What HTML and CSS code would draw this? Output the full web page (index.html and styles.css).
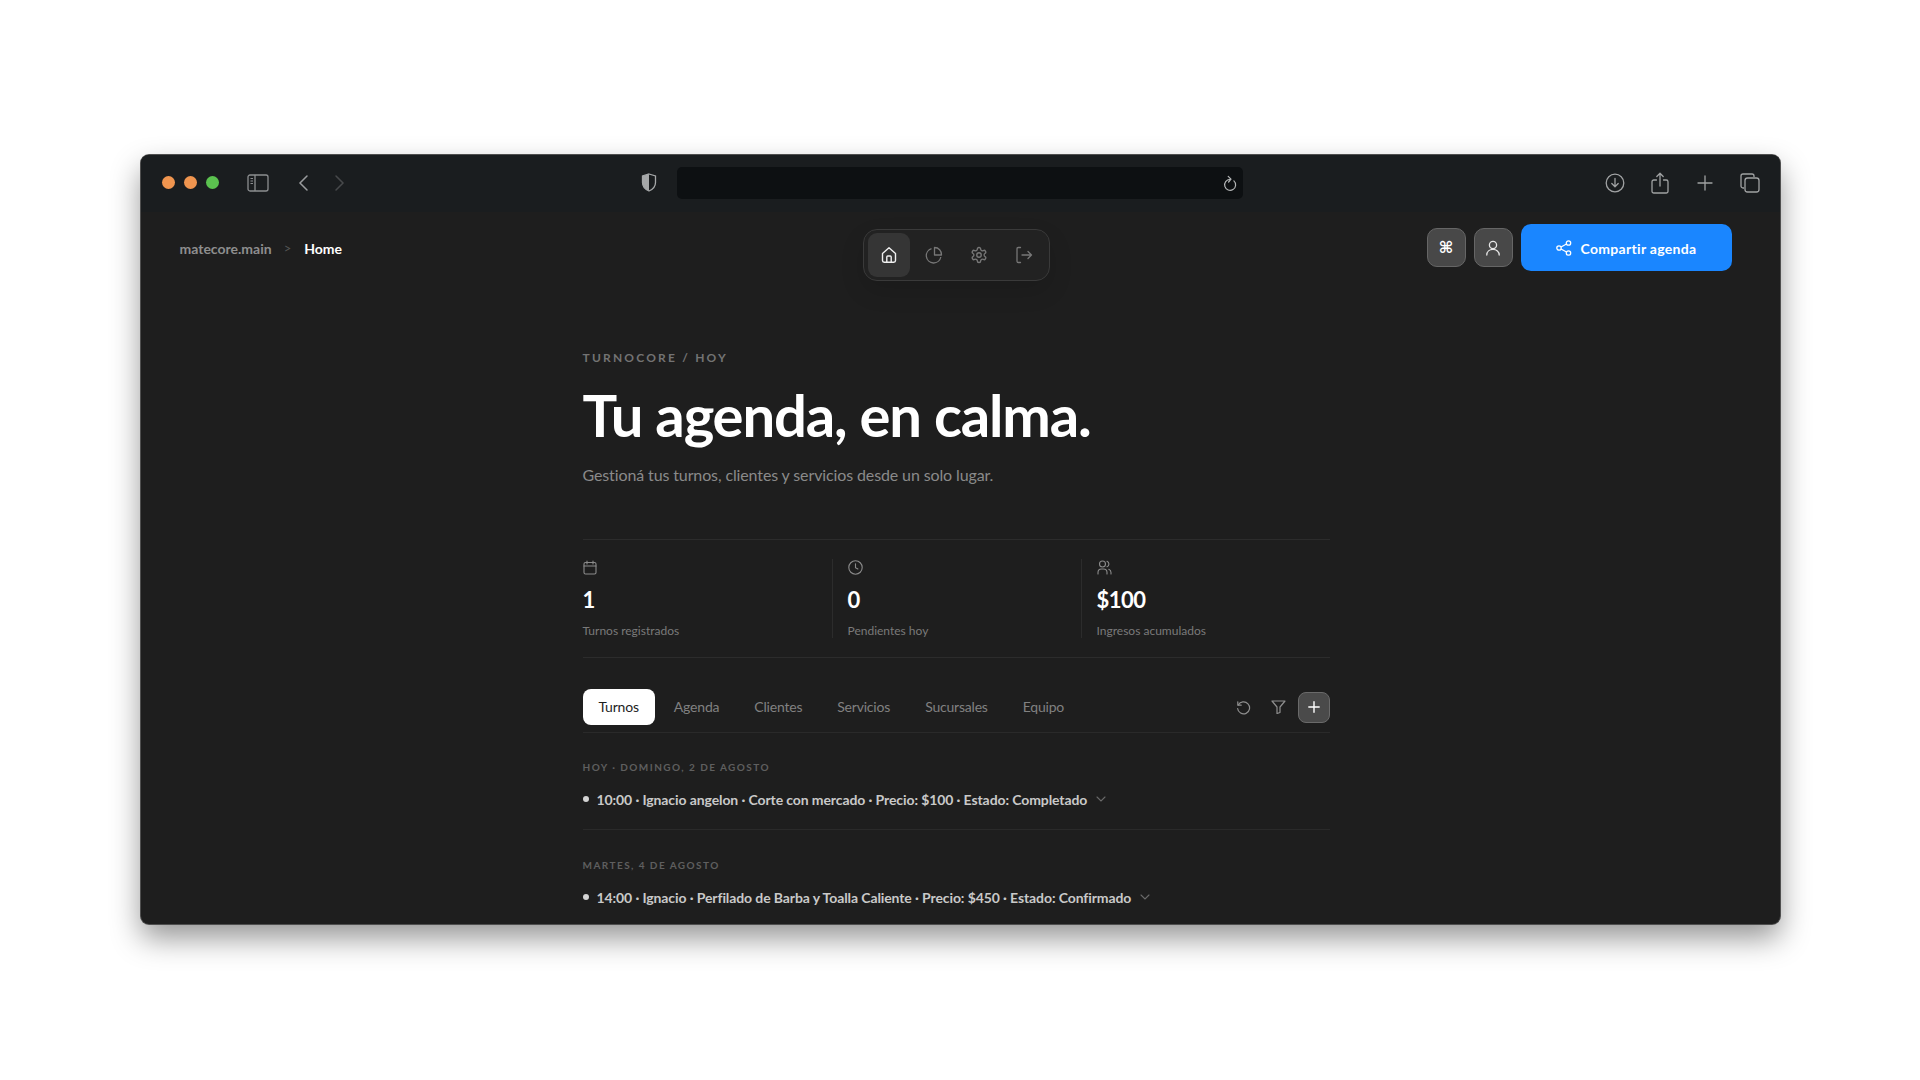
FILE: index.html
```html
<!DOCTYPE html>
<html lang="en">
<head>
    <meta charset="UTF-8">
    <meta name="viewport" content="width=device-width, initial-scale=1.0">
    <title>TurnoCore</title>
    <link rel="stylesheet" href="styles.css">
</head>
<body>
    <div class="window">
        <div class="browser-bar">
            <div class="lights">
                <span class="light orange"></span>
                <span class="light orange"></span>
                <span class="light green"></span>
            </div>
            <svg class="bar-icon sidebar-icon" width="22" height="18" viewBox="0 0 22 18" fill="none" stroke="#8c8e90" stroke-width="1.3"><rect x="1" y="1" width="20" height="16" rx="2"/><path d="M8 1v16"/><path d="M3.5 4.5h2.5M3.5 7h2.5M3.5 9.5h2.5" stroke-width="1"/></svg>
            <svg class="bar-icon back-icon" width="12" height="18" viewBox="0 0 12 18" fill="none" stroke="#9a9c9e" stroke-width="1.5" stroke-linecap="round"><path d="M10 2L3 9l7 7"/></svg>
            <svg class="bar-icon forward-icon" width="12" height="18" viewBox="0 0 12 18" fill="none" stroke="#47494b" stroke-width="1.5" stroke-linecap="round"><path d="M2 2l7 7-7 7"/></svg>
            <svg class="bar-icon shield-icon" width="16" height="19" viewBox="0 0 16 19"><path d="M8 1l6.5 2v6.5c0 4-3 7-6.5 8.5-3.5-1.5-6.5-4.5-6.5-8.5V3z" fill="none" stroke="#a5a7a8" stroke-width="1.3"/><path d="M8 1L1.5 3v6.5c0 4 3 7 6.5 8.5z" fill="#a5a7a8"/></svg>
            <div class="address">
                <svg width="14" height="18" viewBox="0 0 14 18" fill="none" stroke="#b4b6b7" stroke-width="1.2" stroke-linecap="round" stroke-linejoin="round"><path d="M10.9 6.9A5.5 5.5 0 1 1 7 5.4"/><path d="M5.2 2.4L8 5.2 5.6 8"/></svg>
            </div>
            <div class="bar-right">
                <svg width="20" height="20" viewBox="0 0 20 20" fill="none" stroke="#a0a2a3" stroke-width="1.3" stroke-linecap="round" stroke-linejoin="round"><circle cx="10" cy="10" r="8.8"/><path d="M10 5.5v8M6.8 10.5l3.2 3.2 3.2-3.2"/></svg>
                <svg width="20" height="22" viewBox="0 0 18 22" fill="none" stroke="#a0a2a3" stroke-width="1.3" stroke-linecap="round" stroke-linejoin="round"><path d="M5.5 8H2.8A1.8 1.8 0 0 0 1 9.8v9.4A1.8 1.8 0 0 0 2.8 21h12.4a1.8 1.8 0 0 0 1.8-1.8V9.8A1.8 1.8 0 0 0 15.2 8h-2.7"/><path d="M9 14V1.5M5.8 4.5L9 1.3l3.2 3.2"/></svg>
                <svg width="20" height="16" viewBox="0 0 16 16" fill="none" stroke="#a0a2a3" stroke-width="1.3" stroke-linecap="round"><path d="M8 1v14M1 8h14"/></svg>
                <svg width="20" height="20" viewBox="0 0 20 20" fill="none" stroke="#a0a2a3" stroke-width="1.3"><path d="M4 15H3a2 2 0 0 1-2-2V3a2 2 0 0 1 2-2h9a2 2 0 0 1 2 2v1"/><rect x="5" y="5" width="14" height="14" rx="2.5"/></svg>
            </div>
        </div>

        <div class="page">
            <div class="topbar">
                <div class="crumbs">
                    <span class="crumb-root">matecore.main</span>
                    <span class="crumb-sep">&gt;</span>
                    <span class="crumb-current">Home</span>
                </div>
                <nav class="dock">
                    <a class="dock-item active">
                        <svg width="18" height="18" viewBox="0 0 18 18" fill="none" stroke="currentColor" stroke-width="1.4" stroke-linejoin="round"><path d="M2.5 7.5L9 1.8l6.5 5.7v7a1.7 1.7 0 0 1-1.7 1.7H4.2a1.7 1.7 0 0 1-1.7-1.7z"/><path d="M6.8 16v-5a1 1 0 0 1 1-1h2.4a1 1 0 0 1 1 1v5"/></svg>
                    </a>
                    <a class="dock-item">
                        <svg width="18" height="18" viewBox="0 0 18 18" fill="none" stroke="currentColor" stroke-width="1.3" stroke-linejoin="round"><path d="M6.5 2.7A7.3 7.3 0 1 0 15.8 11"/><path d="M9.5 1.5a7 7 0 0 1 7 7.5H9.5z"/></svg>
                    </a>
                    <a class="dock-item">
                        <svg width="18" height="18" viewBox="0 0 24 24" fill="none" stroke="currentColor" stroke-width="1.8" stroke-linejoin="round"><path d="M12.22 2h-.44a2 2 0 0 0-2 2v.18a2 2 0 0 1-1 1.73l-.43.25a2 2 0 0 1-2 0l-.15-.08a2 2 0 0 0-2.73.73l-.22.38a2 2 0 0 0 .73 2.73l.15.1a2 2 0 0 1 1 1.72v.51a2 2 0 0 1-1 1.74l-.15.09a2 2 0 0 0-.73 2.73l.22.38a2 2 0 0 0 2.73.73l.15-.08a2 2 0 0 1 2 0l.43.25a2 2 0 0 1 1 1.73V20a2 2 0 0 0 2 2h.44a2 2 0 0 0 2-2v-.18a2 2 0 0 1 1-1.73l.43-.25a2 2 0 0 1 2 0l.15.08a2 2 0 0 0 2.73-.73l.22-.39a2 2 0 0 0-.73-2.73l-.15-.08a2 2 0 0 1-1-1.74v-.5a2 2 0 0 1 1-1.74l.15-.09a2 2 0 0 0 .73-2.73l-.22-.38a2 2 0 0 0-2.73-.73l-.15.08a2 2 0 0 1-2 0l-.43-.25a2 2 0 0 1-1-1.73V4a2 2 0 0 0-2-2z"/><circle cx="12" cy="12" r="3"/></svg>
                    </a>
                    <a class="dock-item">
                        <svg width="18" height="18" viewBox="0 0 18 18" fill="none" stroke="currentColor" stroke-width="1.3" stroke-linecap="round" stroke-linejoin="round"><path d="M5.5 1.5H3.2A1.2 1.2 0 0 0 2 2.7v12.6a1.2 1.2 0 0 0 1.2 1.2h2.3"/><path d="M7 9h9.5M13 5.5L16.5 9 13 12.5"/></svg>
                    </a>
                </nav>
                <div class="top-actions">
                    <button class="square-btn cmd-btn">⌘</button>
                    <button class="square-btn">
                        <svg width="16" height="16" viewBox="0 0 16 16" fill="none" stroke="#e6e6e6" stroke-width="1.3" stroke-linecap="round"><circle cx="8" cy="5" r="3.6"/><path d="M1.8 15c0-3.3 2.7-5.6 6.2-5.6s6.2 2.3 6.2 5.6"/></svg>
                    </button>
                    <button class="share-btn">
                        <svg width="16" height="16" viewBox="0 0 16 16" fill="none" stroke="#fff" stroke-width="1.3"><circle cx="12.5" cy="3" r="2.2"/><circle cx="3" cy="8" r="2.2"/><circle cx="12.5" cy="13" r="2.2"/><path d="M5 7l5.5-3M5 9l5.5 3"/></svg>
                        Compartir agenda
                    </button>
                </div>
            </div>

            <main class="content">
                <div class="eyebrow">TURNOCORE / HOY</div>
                <h1>Tu agenda, en calma.</h1>
                <p class="lead">Gestioná tus turnos, clientes y servicios desde un solo lugar.</p>

                <section class="stats">
                    <div class="stat">
                        <svg width="14" height="15" viewBox="0 0 14 15" fill="none" stroke="#8b8b8b" stroke-width="1.1" stroke-linecap="round"><rect x="1" y="2.5" width="12" height="11.5" rx="1.5"/><path d="M1 6h12M4 1v3M10 1v3"/></svg>
                        <div class="stat-value">1</div>
                        <div class="stat-label">Turnos registrados</div>
                    </div>
                    <div class="stat">
                        <svg width="15" height="15" viewBox="0 0 15 15" fill="none" stroke="#8b8b8b" stroke-width="1.1" stroke-linecap="round"><circle cx="7.5" cy="7.5" r="6.7"/><path d="M7.5 3.8v3.9l2.4 1.3"/></svg>
                        <div class="stat-value">0</div>
                        <div class="stat-label">Pendientes hoy</div>
                    </div>
                    <div class="stat">
                        <svg width="15" height="15" viewBox="0 0 15 15" fill="none" stroke="#8b8b8b" stroke-width="1.1" stroke-linecap="round"><circle cx="5.5" cy="4" r="3"/><path d="M1 14v-1.5A3.5 3.5 0 0 1 4.5 9h2A3.5 3.5 0 0 1 10 12.5V14"/><path d="M10 1.2a3 3 0 0 1 0 5.6M11.8 9.3A3.5 3.5 0 0 1 14 12.5V14"/></svg>
                        <div class="stat-value">$100</div>
                        <div class="stat-label">Ingresos acumulados</div>
                    </div>
                </section>

                <div class="tabs">
                    <a class="tab active">Turnos</a>
                    <a class="tab">Agenda</a>
                    <a class="tab">Clientes</a>
                    <a class="tab">Servicios</a>
                    <a class="tab">Sucursales</a>
                    <a class="tab">Equipo</a>
                    <div class="tab-tools">
                        <svg width="15" height="15" viewBox="0 0 15 15" fill="none" stroke="#8f8f8f" stroke-width="1.2" stroke-linecap="round" stroke-linejoin="round"><path d="M2.3 5A6 6 0 1 1 1.6 8.5"/><path d="M1.8 1.8v3.4h3.4"/></svg>
                        <svg width="15" height="14" viewBox="0 0 15 14" fill="none" stroke="#8f8f8f" stroke-width="1.2" stroke-linejoin="round"><path d="M1 1h13L9 7v5.5L6 13.5V7z"/></svg>
                        <button class="add-btn">
                            <svg width="12" height="12" viewBox="0 0 12 12" fill="none" stroke="#fff" stroke-width="1.4" stroke-linecap="round"><path d="M6 .8v10.4M.8 6h10.4"/></svg>
                        </button>
                    </div>
                </div>

                <div class="day">
                    <div class="day-title">HOY · DOMINGO, 2 DE AGOSTO</div>
                    <div class="turno">
                        <span class="dot"></span>
                        <span>10:00 · Ignacio angelon · Corte con mercado · Precio: $100 · Estado: Completado</span>
                        <svg width="10" height="6" viewBox="0 0 10 6" fill="none" stroke="#6a6a6a" stroke-width="1.1" stroke-linecap="round"><path d="M1 1l4 4 4-4"/></svg>
                    </div>
                </div>
                <div class="day day-last">
                    <div class="day-title">MARTES, 4 DE AGOSTO</div>
                    <div class="turno">
                        <span class="dot"></span>
                        <span>14:00 · Ignacio · Perfilado de Barba y Toalla Caliente · Precio: $450 · Estado: Confirmado</span>
                        <svg width="10" height="6" viewBox="0 0 10 6" fill="none" stroke="#6a6a6a" stroke-width="1.1" stroke-linecap="round"><path d="M1 1l4 4 4-4"/></svg>
                    </div>
                </div>
            </main>
        </div>
    </div>
</body>
</html>
```
FILE: styles.css
```css
* {
    box-sizing: border-box;
}

body {
    margin: 0;
    padding-bottom: 1px;
    height: 100vh;
    overflow: hidden;
    display: flex;
    justify-content: center;
    align-items: center;
    background: #ffffff;
    font-family: "Lato", "Noto Sans", sans-serif;
    color: #ffffff;
}

.window {
    width: 1639px;
    height: 769px;
    display: flex;
    flex-direction: column;
    overflow: hidden;
    border-radius: 8px;
    background: #1e1e1e;
    box-shadow: 0 0 0 1px #4f4f4f, 0 14px 30px rgba(0, 0, 0, 0.42);
}

/* browser chrome */
.browser-bar {
    flex: none;
    height: 57px;
    display: flex;
    align-items: center;
    padding: 0 20px 2px 21px;
    background: #1a1d1f;
}

.lights {
    display: flex;
    gap: 9px;
}

.light {
    width: 13px;
    height: 13px;
    border-radius: 50%;
}

.orange {
    background: #f0954f;
}

.green {
    background: #5bc24f;
}

.bar-icon {
    flex: none;
}

.sidebar-icon {
    margin-left: 28px;
}

.back-icon {
    margin-left: 28px;
}

.forward-icon {
    margin-left: 25px;
}

.shield-icon {
    margin-left: 295px;
}

.address {
    width: 566px;
    height: 32px;
    margin-left: 20px;
    padding-right: 6px;
    display: flex;
    justify-content: flex-end;
    align-items: center;
    border-radius: 5px;
    background: #0d1012;
}

.bar-right {
    margin-left: auto;
    display: flex;
    align-items: center;
    gap: 25px;
}

/* page header */
.page {
    flex: 1;
    display: flex;
    flex-direction: column;
    padding: 12px 48px 0 39px;
}

.topbar {
    flex: none;
    display: grid;
    grid-template-columns: 1fr auto 1fr;
    align-items: start;
}

.crumbs {
    height: 47px;
    padding-top: 1px;
    display: flex;
    align-items: center;
    gap: 12px;
    font-size: 14px;
    font-weight: 700;
}

.crumb-root {
    color: #8e8e8e;
}

.crumb-sep {
    color: #555555;
    font-weight: 400;
    font-size: 13px;
}

.crumb-current {
    margin-left: 1px;
    color: #ffffff;
}

.dock {
    margin: 5px 0 0 1px;
    height: 52px;
    width: 187px;
    display: flex;
    gap: 3px;
    padding: 3px 4px;
    border: 1px solid #3a3a3a;
    border-radius: 14px;
    background: #222222;
    box-shadow: 0 10px 24px rgba(0, 0, 0, 0.12);
}

.dock-item {
    width: 42px;
    display: flex;
    justify-content: center;
    align-items: center;
    border-radius: 9px;
    color: #777777;
}

.dock-item.active {
    background: #353535;
    color: #f0f0f0;
}

.top-actions {
    height: 47px;
    display: flex;
    justify-content: flex-end;
    align-items: center;
    gap: 8px;
}

.square-btn {
    width: 39px;
    height: 39px;
    display: flex;
    justify-content: center;
    align-items: center;
    padding: 0;
    border: 1px solid #666666;
    border-radius: 10px;
    background: #484848;
    color: #ffffff;
}

.cmd-btn {
    font-family: "DejaVu Sans", sans-serif;
    font-size: 16px;
    font-weight: 700;
}

.share-btn {
    width: 211px;
    height: 47px;
    padding: 1px 0 0;
    display: flex;
    justify-content: center;
    align-items: center;
    gap: 9px;
    border: 0;
    border-radius: 10px;
    background: #1a86ff;
    color: #ffffff;
    font-family: inherit;
    font-size: 14px;
    font-weight: 700;
    letter-spacing: 0.3px;
}

/* main column */
.content {
    width: 747px;
    margin: 69px 0 0 403px;
}

.eyebrow {
    font-size: 12px;
    line-height: 16px;
    font-weight: 700;
    letter-spacing: 2.2px;
    color: #737373;
}

h1 {
    margin: 12px 0 0;
    font-size: 58px;
    line-height: 74px;
    font-weight: 700;
    letter-spacing: -1.13px;
    color: #ffffff;
}

.lead {
    margin: 11px 0 0;
    font-size: 16px;
    line-height: 24px;
    letter-spacing: -0.12px;
    color: #8a8a8a;
}

.stats {
    margin-top: 52px;
    height: 119px;
    display: grid;
    grid-template-columns: repeat(3, 1fr);
    align-items: center;
    border-top: 1px solid #2c2c2c;
    border-bottom: 1px solid #2c2c2c;
}

.stat {
    height: 79px;
    padding-left: 15px;
    border-left: 1px solid #2c2c2c;
}

.stat:first-child {
    padding-left: 0;
    border-left: 0;
}

.stat svg {
    display: block;
    margin-top: 1px;
}

.stat-value {
    margin-top: 11px;
    font-size: 22px;
    line-height: 28px;
    font-weight: 700;
    letter-spacing: -0.5px;
}

.stat-label {
    margin-top: 9px;
    font-size: 12px;
    line-height: 16px;
    color: #7a7a7a;
}

.tabs {
    height: 75px;
    display: flex;
    align-items: center;
    gap: 3px;
    padding-top: 31px;
    padding-bottom: 7px;
    border-bottom: 1px solid #2a2a2a;
}

.tab {
    height: 36px;
    display: flex;
    align-items: center;
    padding: 0 16px 1px;
    border-radius: 8px;
    font-size: 14px;
    letter-spacing: -0.2px;
    color: #818181;
}

.tab.active {
    background: #ffffff;
    color: #1e1e1e;
}

.tab-tools {
    margin-left: auto;
    display: flex;
    align-items: center;
    gap: 20px;
}

.add-btn {
    width: 32px;
    height: 31px;
    display: flex;
    justify-content: center;
    align-items: center;
    padding: 0;
    margin-left: -8px;
    border: 1px solid #6a6a6a;
    border-radius: 8px;
    background: #4a4a4a;
}

.day {
    padding: 27px 0 18px;
    border-bottom: 1px solid #2a2a2a;
}

.day-last {
    padding-top: 28px;
    border-bottom: 0;
}

.day-title {
    font-size: 10px;
    line-height: 14px;
    font-weight: 700;
    letter-spacing: 1.45px;
    color: #5f5f5f;
}

.turno {
    margin-top: 13px;
    height: 24px;
    display: flex;
    align-items: center;
    gap: 8px;
    font-size: 14px;
    font-weight: 700;
    letter-spacing: -0.1px;
    color: #c9c9c9;
}

.turno svg {
    margin-left: 1px;
}

.dot {
    width: 6px;
    height: 6px;
    border-radius: 50%;
    background: #d4d4d4;
}
```
